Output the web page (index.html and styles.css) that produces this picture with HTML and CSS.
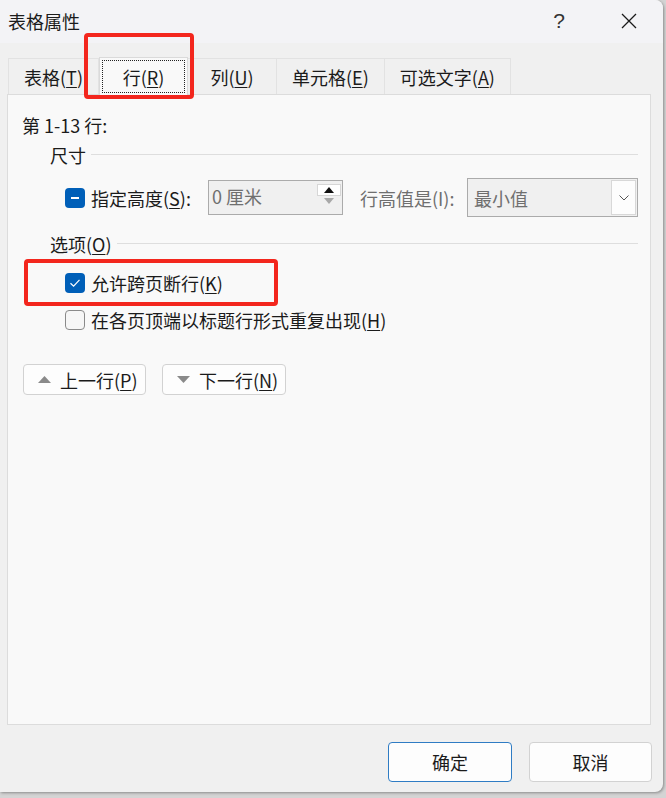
FILE: index.html
```html
<!DOCTYPE html>
<html lang="zh-CN">
<head>
<meta charset="utf-8">
<title>表格属性</title>
<link rel="stylesheet" href="styles.css">
</head>
<body>
<div class="window">
  <div class="titlebar">
    <span class="title">表格属性</span>
    <span class="help">?</span>
    <span class="close">
      <svg width="16" height="16" viewBox="0 0 16 16"><path d="M1 1 L15 15 M15 1 L1 15" stroke="#1a1a1a" stroke-width="1.3" fill="none"/></svg>
    </span>
  </div>

  <div class="tabs">
    <div class="tab">表格(<u>T</u>)</div>
    <div class="tab selected"><span class="focus">行(<u>R</u>)</span></div>
    <div class="tab">列(<u>U</u>)</div>
    <div class="tab">单元格(<u>E</u>)</div>
    <div class="tab">可选文字(<u>A</u>)</div>
  </div>

  <div class="panel">
    <div class="rows-label">第 1-13 行:</div>

    <div class="group-head">尺寸</div>
    <div class="size-row">
      <span class="cb indeterminate"><span class="dash"></span></span>
      <span class="lbl-height">指定高度(<u>S</u>):</span>
      <div class="spin">
        <span class="spin-val">0 厘米</span>
        <div class="spin-btns">
          <span class="spin-up"><svg width="10" height="6" viewBox="0 0 10 6"><path d="M0 6 L5 0 L10 6 Z" fill="#111"/></svg></span>
          <span class="spin-down"><svg width="10" height="6" viewBox="0 0 10 6"><path d="M0 0 L10 0 L5 6 Z" fill="#a8a8a8"/></svg></span>
        </div>
      </div>
      <span class="lbl-rule">行高值是(I):</span>
      <div class="combo">
        <span class="combo-val">最小值</span>
        <span class="combo-btn"><svg width="10" height="6" viewBox="0 0 10 6"><path d="M0.5 0.5 L5 5 L9.5 0.5" stroke="#555" stroke-width="1" fill="none"/></svg></span>
      </div>
    </div>

    <div class="group-head opts">选项(<u>O</u>)</div>
    <div class="check-row first">
      <span class="cb checked"><svg width="12" height="10" viewBox="0 0 12 10"><path d="M1.5 5.2 L4.6 8.2 L10.5 1.8" stroke="#fff" stroke-width="1.2" fill="none"/></svg></span>
      <span class="check-lbl">允许跨页断行(<u>K</u>)</span>
    </div>
    <div class="check-row">
      <span class="cb unchecked"></span>
      <span class="check-lbl">在各页顶端以标题行形式重复出现(<u>H</u>)</span>
    </div>

    <div class="nav">
      <button class="nav-btn"><svg width="13" height="7" viewBox="0 0 13 7"><path d="M0 7 L6.5 0 L13 7 Z" fill="#8a8a8a"/></svg><span>上一行(<u>P</u>)</span></button>
      <button class="nav-btn"><svg width="13" height="7" viewBox="0 0 13 7"><path d="M0 0 L13 0 L6.5 7 Z" fill="#8a8a8a"/></svg><span>下一行(<u>N</u>)</span></button>
    </div>
  </div>

  <div class="footer">
    <button class="btn primary">确定</button>
    <button class="btn">取消</button>
  </div>

  <div class="mark mark-tab"></div>
  <div class="mark mark-opt"></div>
</div>
</body>
</html>
```

FILE: styles.css
```css
* { box-sizing: border-box; }
html, body {
  margin: 0;
  padding: 0;
  background: #d4d4d4;
  height: 798px;
  overflow: hidden;
}
body {
  font-family: "Noto Sans CJK SC", "Noto Sans", sans-serif;
  font-size: 18px;
  color: #1b1b1b;
}
u { text-decoration: underline; text-underline-offset: 2px; text-decoration-thickness: 1px; }

.window {
  position: relative;
  width: 663px;
  height: 792px;
  background: #f0f0f0;
  border-radius: 0 8px 8px 0;
  box-shadow: 1px 1px 3px rgba(0,0,0,0.35);
  display: flex;
  flex-direction: column;
}

.titlebar {
  height: 43px;
  flex: none;
  display: flex;
  align-items: center;
  padding-left: 8px;
  background: #f3f3f6;
  border-radius: 0 8px 0 0;
}
.title { font-size: 18px; line-height: 24px; margin-top: -2px; }
.help {
  margin-left: auto;
  font-family: "Liberation Sans", sans-serif;
  font-size: 21px;
  line-height: 24px;
  color: #333;
  margin-top: -2px;
}
.close {
  display: flex;
  margin-left: 56px;
  margin-right: 26px;
  margin-top: -1px;
}

.tabs {
  display: flex;
  padding-left: 8px;
  margin-top: 15px;
  height: 36px;
  flex: none;
  position: relative;
  z-index: 1;
}
.tab {
  min-width: 89px;
  padding: 0 15px;
  height: 36px;
  line-height: 36px;
  text-align: center;
  border: 1px solid #e2e2e2;
  border-bottom: none;
  border-left: none;
  background: #f0f0f0;
  white-space: nowrap;
}
.tab:first-child { border-left: 1px solid #e2e2e2; }
.tab.selected {
  background: #f9f9f9;
  border: 1px solid #dadada;
  border-bottom: none;
  height: 39px;
  margin-top: -1px;
  padding: 2px 2px 0;
  line-height: 32px;
}
.focus {
  display: block;
  height: 33px;
  border: 1px dotted #222;
}

.panel {
  margin-left: 7px;
  width: 644px;
  height: 631px;
  background: #f9f9f9;
  border: 1px solid #dcdcdc;
  padding: 18px 12px 0 14px;
  flex: none;
}
.rows-label { line-height: 24px; }

.group-head {
  display: flex;
  align-items: center;
  margin-left: 28px;
  margin-top: 6px;
  line-height: 24px;
}
.group-head::after {
  content: "";
  flex: 1;
  height: 1px;
  background: #dedede;
  margin-left: 5px;
  margin-top: -2px;
}
.group-head.opts { margin-top: 15px; }

.size-row {
  display: flex;
  align-items: center;
  margin-left: 43px;
  margin-top: 11px;
  height: 39px;
}

.cb {
  width: 20px;
  height: 20px;
  border-radius: 4px;
  flex: none;
  display: flex;
  align-items: center;
  justify-content: center;
}
.cb.indeterminate, .cb.checked { background: #005fb8; }
.dash { width: 8px; height: 2px; background: #fff; }
.cb.unchecked { background: #f6f6f6; border: 1px solid #8a8a8a; }

.lbl-height { margin-left: 6px; width: 117px; flex: none; }
.spin {
  width: 135px;
  height: 35px;
  border: 1px solid #ababab;
  background: #f0f0f0;
  display: flex;
  align-items: flex-start;
  flex: none;
}
.spin-val { color: #6f6f6f; padding-left: 3px; line-height: 31px; flex: 1; }
.spin-btns {
  width: 24px;
  margin: 3px 1px 0 0;
  display: flex;
  flex-direction: column;
}
.spin-up {
  height: 12px;
  background: #fff;
  border: 1px solid #d6d6d6;
  display: flex;
  align-items: center;
  justify-content: center;
}
.spin-down {
  height: 10px;
  display: flex;
  align-items: center;
  justify-content: center;
}
.lbl-rule { margin-left: 17px; width: 107px; color: #6f6f6f; flex: none; }
.combo {
  flex: 1;
  height: 39px;
  border: 1px solid #ababab;
  background: #f0f0f0;
  display: flex;
  align-items: center;
  padding: 1px 1px;
}
.combo-val { flex: 1; color: #6f6f6f; padding-left: 5px; }
.combo-btn {
  width: 25px;
  height: 35px;
  background: #fdfdfd;
  border: 1px solid #d8d8d8;
  display: flex;
  align-items: center;
  justify-content: center;
}

.check-row {
  display: flex;
  align-items: center;
  margin-left: 43px;
  height: 30px;
  margin-top: 7px;
}
.check-row.first { margin-top: 12px; }
.check-lbl { margin-left: 6px; }

.nav {
  display: flex;
  gap: 16px;
  margin-top: 29px;
  margin-left: 1px;
}
.nav-btn {
  font: inherit;
  color: inherit;
  height: 31px;
  width: 123px;
  background: #fdfdfd;
  border: 1px solid #d2d2d2;
  border-radius: 4px;
  display: flex;
  align-items: center;
  padding: 0 0 0 14px;
  gap: 9px;
}
.nav-btn + .nav-btn { width: 124px; }
.nav-btn span { line-height: 24px; }

.footer {
  display: flex;
  justify-content: flex-end;
  gap: 17px;
  margin-top: 17px;
  padding-right: 11px;
}
.btn {
  font: inherit;
  color: inherit;
  width: 123px;
  height: 40px;
  background: #fdfdfd;
  border: 1px solid #d2d2d2;
  border-radius: 4px;
}
.btn.primary { width: 124px; border-color: #2f7cc4; }

.mark {
  position: absolute;
  border: 4px solid #f3261d;
  border-radius: 4px;
  z-index: 5;
}
.mark-tab { left: 84px; top: 33px; width: 110px; height: 66px; }
.mark-opt { left: 24px; top: 259px; width: 254px; height: 47px; }
```
